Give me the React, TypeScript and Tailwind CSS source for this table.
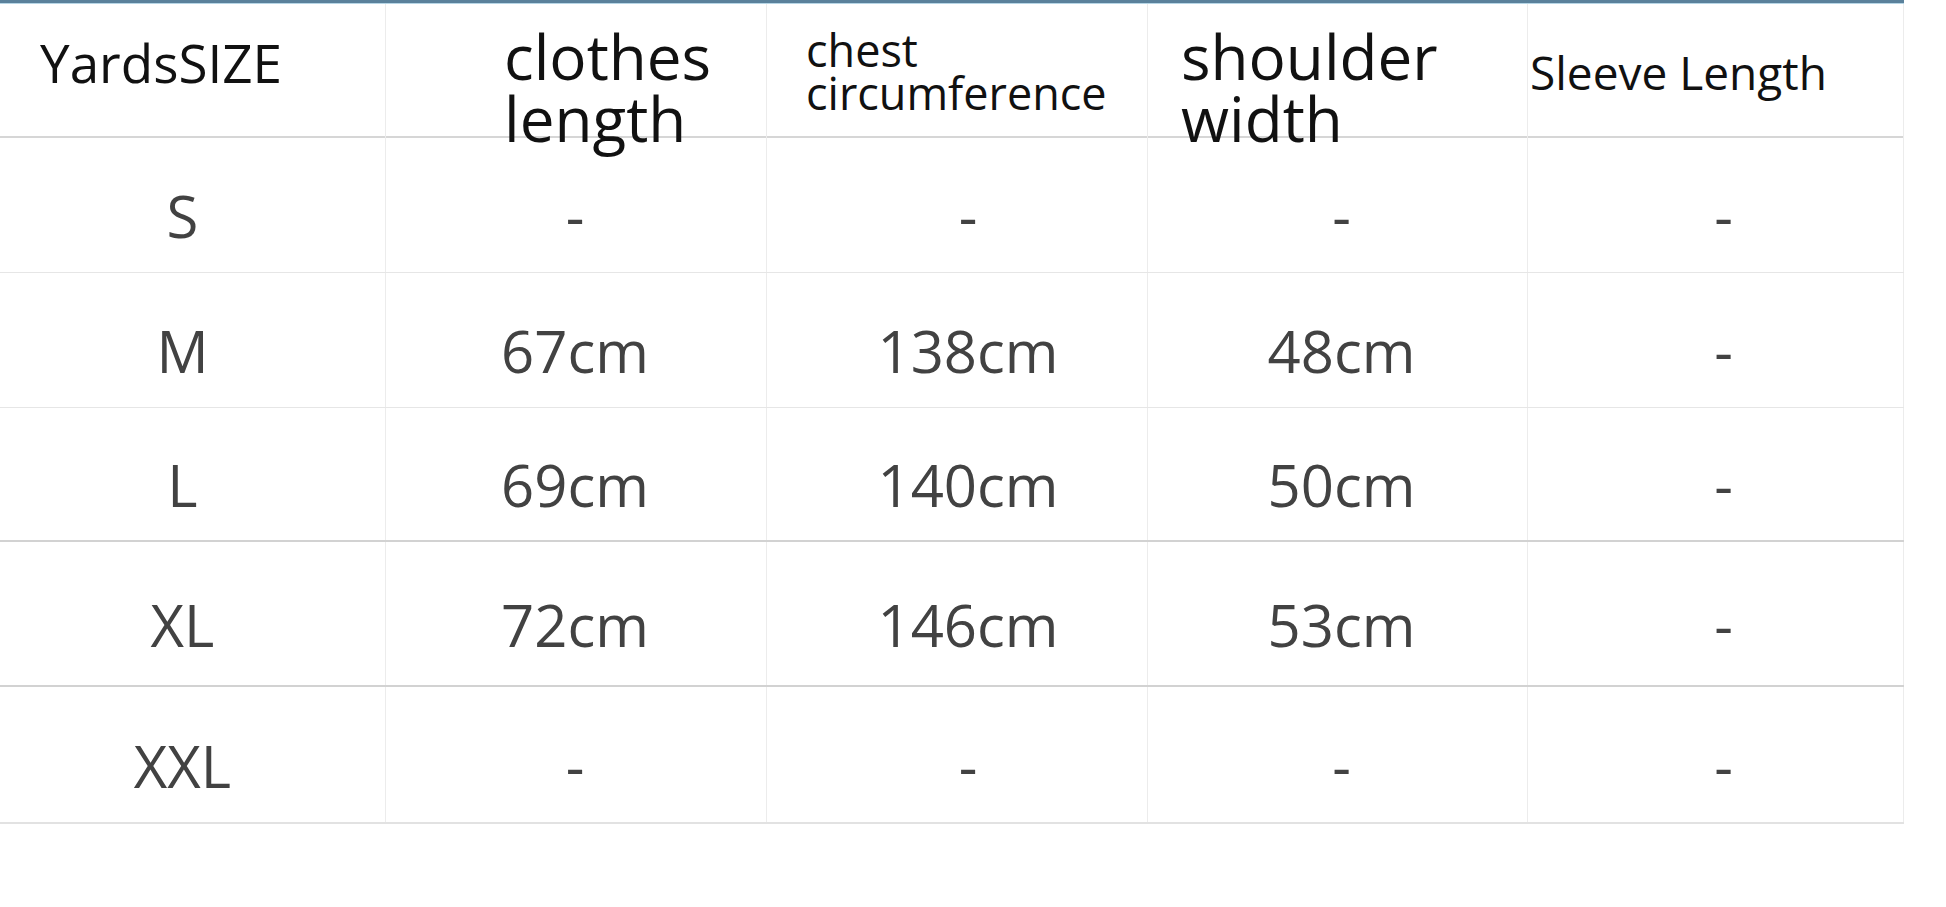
const rows = [
  { size: 'S', values: ['-', '-', '-', '-'], h: 'h-[135px]', line: 'border-b border-[#e6e6e6]' },
  { size: 'M', values: ['67cm', '138cm', '48cm', '-'], h: 'h-[135px]', line: 'border-b border-[#e6e6e6]' },
  { size: 'L', values: ['69cm', '140cm', '50cm', '-'], h: 'h-[134px]', line: 'border-b-2 border-[#d2d2d2]' },
  { size: 'XL', values: ['72cm', '146cm', '53cm', '-'], h: 'h-[145px]', line: 'border-b-2 border-[#d2d2d2]' },
  { size: 'XXL', values: ['-', '-', '-', '-'], h: 'h-[137px]', line: 'border-b-2 border-[#e2e2e2]' },
];

// horizontal nudge of each column's centred text
const colShift = ['pr-[20px]', 'pr-[2px]', 'pl-[22px]', 'pl-[8px]', 'pl-[16px]'];

export default function App() {
  return (
    <div className="min-h-[907px] w-full bg-white font-['Open_Sans',sans-serif]">
      <div className="w-[1904px]">
        {/* top accent bar */}
        <div className="h-[3px] bg-[#5a819b]" />
        <div className="h-[1px] bg-[#b7d6e6]" />

        {/* header */}
        <div className="grid h-[134px] grid-cols-[386px_381px_381px_380px_376px] border-b-2 border-[#d6d6d6] text-[#111]">
          <div className="border-r border-[#ececec] pl-[40px] pt-[32px] text-[53px] leading-[53px]">YardsSIZE</div>
          <div className="border-r border-[#ececec] pl-[118px] pt-[21px] text-[62px] leading-[62px]">
            <div>clothes</div>
            <div>length</div>
          </div>
          <div className="border-r border-[#ececec] pl-[39px] pt-[24px] text-[45px] leading-[43px]">
            <div>chest</div>
            <div>circumference</div>
          </div>
          <div className="border-r border-[#ececec] pl-[33px] pt-[21px] text-[62px] leading-[62px]">
            <div>shoulder</div>
            <div>width</div>
          </div>
          <div className="border-r border-[#ececec] pl-[2px] pt-[45px] text-[46px] leading-[46px] whitespace-nowrap">Sleeve Length</div>
        </div>

        {/* size rows */}
        {rows.map((row) => (
          <div key={row.size} className={`grid grid-cols-[386px_381px_381px_380px_376px] text-[58px] leading-[58px] text-[#424242] ${row.h} ${row.line}`}>
            {[row.size, ...row.values].map((v, i) => (
              <div key={i} className={`flex items-center justify-center border-r border-[#ececec] pt-[22px] ${colShift[i]}`}>
                {v}
              </div>
            ))}
          </div>
        ))}
      </div>
    </div>
  );
}
